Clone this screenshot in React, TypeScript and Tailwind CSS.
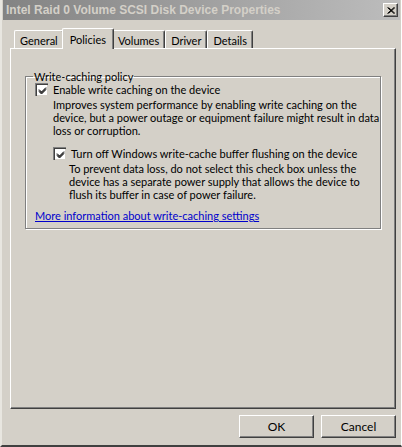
import React from 'react';

const font = "font-['Lato','Liberation_Sans',sans-serif]";

const Check: React.FC = () => (
  <div className="w-[13px] h-[13px] shrink-0 bg-white border-t border-l border-[#808080] border-r-white border-b-white shadow-[inset_1px_1px_0_#404040,inset_-1px_-1px_0_#d4d0c8] flex items-center justify-center">
    <svg width="9" height="9" viewBox="0 0 9 9">
      <path d="M1 3.5 L3.5 6 L8 1.5 M1 4.5 L3.5 7 L8 2.5 M1 5.5 L3.5 8 L8 3.5" stroke="#000" strokeWidth="1" fill="none" />
    </svg>
  </div>
);

const tabs = ['General', 'Policies', 'Volumes', 'Driver', 'Details'];

const Tab: React.FC<{ label: string; active?: boolean }> = ({ label, active }) => (
  <div
    className={
      active
        ? 'relative z-10 -mx-[2px] h-[21px] -mb-[1px] px-[7px] pt-[3px] bg-[#d4d0c8] border-t border-l border-white border-r border-r-[#404040] rounded-t-[2px] shadow-[inset_-1px_0_0_#808080] text-[11px] leading-[15px]'
        : 'h-[18px] mt-[2px] px-[5px] pt-[2px] border-t border-l border-white border-r border-r-[#404040] rounded-t-[2px] shadow-[inset_-1px_0_0_#808080] text-[11px] leading-[15px]'
    }
  >
    {label}
  </div>
);

export default function App() {
  return (
    <div className={`${font} w-[402px] h-[447px] bg-[#d4d0c8] text-black flex flex-col border-l-2 border-l-[#e8e6e0] border-b-2 border-b-[#404040] border-r border-r-[#fff] overflow-hidden`}>
      {/* title bar */}
      <div className="h-[20px] mx-[1px] flex items-center justify-between pl-[3px] pr-[2px] bg-gradient-to-r from-[#838383] to-[#bdbdbd]">
        <span className="font-['Liberation_Sans',sans-serif] text-[12px] font-bold text-[#d4d0c8]">
          Intel Raid 0 Volume SCSI Disk Device Properties
        </span>
        <div className="w-[15px] h-[14px] bg-[#d4d0c8] border-t border-l border-white border-r border-b border-r-[#404040] border-b-[#404040] shadow-[inset_-1px_-1px_0_#808080] flex items-center justify-center">
          <svg width="8" height="7" viewBox="0 0 8 7">
            <path d="M0.5 0.5 L7 6.5 M1.5 0.5 L8 6.5 M7 0.5 L0.5 6.5 M8 0.5 L1.5 6.5" stroke="#000" strokeWidth="1" />
          </svg>
        </div>
      </div>

      {/* tabs */}
      <div className="mt-[8px] ml-[10px] flex items-end pl-[2px]">
        {tabs.map((t) => (
          <Tab key={t} label={t} active={t === 'Policies'} />
        ))}
      </div>

      {/* panel */}
      <div className="ml-[8px] mr-[5px] h-[361px] border-t border-l border-white border-r border-b border-r-[#404040] border-b-[#404040] shadow-[inset_-1px_-1px_0_#808080] pt-[21px] pl-[14px] pr-[14px]">
        <fieldset className="min-w-0 h-[159px] border border-[#808080] shadow-[1px_1px_0_#fff,inset_1px_1px_0_#fff] pl-[9px] pr-[6px] text-[11px] leading-[13px] whitespace-nowrap">
          <legend className="ml-[-2px] px-[1px]">Write-caching policy</legend>
          <div className="flex items-center gap-[5px]">
            <Check />
            <span>Enable write caching on the device</span>
          </div>
          <p className="ml-[18px] mt-[2px]">
            Improves system performance by enabling write caching on the
            <br />
            device, but a power outage or equipment failure might result in data
            <br />
            loss or corruption.
          </p>
          <div className="ml-[18px] mt-[10px] flex items-center gap-[5px]">
            <Check />
            <span>Turn off Windows write-cache buffer flushing on the device</span>
          </div>
          <p className="ml-[34px] mt-[2px]">
            To prevent data loss, do not select this check box unless the
            <br />
            device has a separate power supply that allows the device to
            <br />
            flush its buffer in case of power failure.
          </p>
          <a href="#" className="inline-block mt-[8px] text-[#0000cc] underline">
            More information about write-caching settings
          </a>
        </fieldset>
      </div>

      {/* buttons */}
      <div className="mt-[6px] mr-[5px] flex justify-end gap-[7px]">
        {['OK', 'Cancel'].map((b) => (
          <button
            key={b}
            className="w-[75px] h-[23px] text-[12px] bg-[#d4d0c8] border-t border-l border-white border-r border-b border-r-[#404040] border-b-[#404040] shadow-[inset_-1px_-1px_0_#808080]"
          >
            {b}
          </button>
        ))}
      </div>
    </div>
  );
}
